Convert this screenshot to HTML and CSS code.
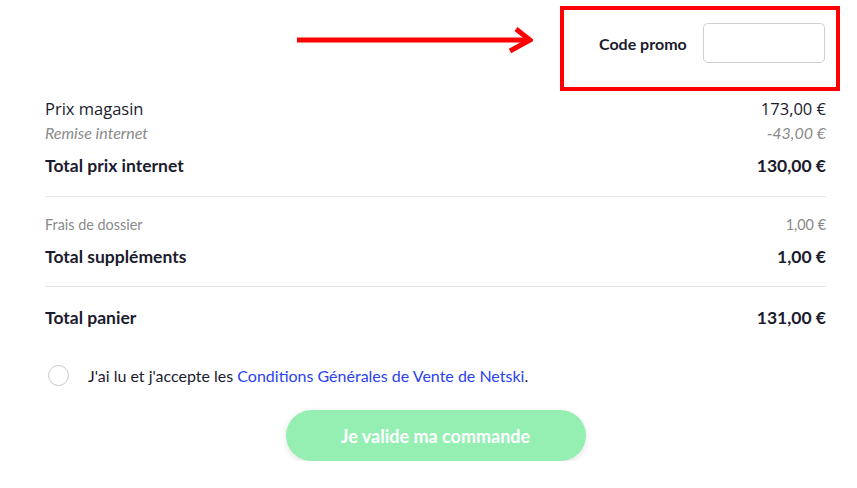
FILE: index.html
```html
<!DOCTYPE html>
<html lang="fr">
<head>
<meta charset="utf-8">
<title>Panier</title>
<link rel="stylesheet" href="styles.css">
</head>
<body>
<div class="page">
  <div class="top">
    <svg class="arrow" width="236" height="26" viewBox="0 0 236 26" aria-hidden="true">
      <line x1="0" y1="13" x2="230" y2="13" stroke="#ff0000" stroke-width="5"/>
      <polyline points="219,2 233,13 213,24" fill="none" stroke="#ff0000" stroke-width="5" stroke-linejoin="miter"/>
    </svg>
    <div class="promo">
      <label class="promo-label" for="promo">Code promo</label>
      <input class="promo-input" id="promo" type="text">
    </div>
  </div>

  <div class="section first">
    <div class="row regular"><span>Prix magasin</span><span>173,00 €</span></div>
    <div class="row sub italic"><span>Remise internet</span><span>-43,00 €</span></div>
    <div class="row total"><span>Total prix internet</span><span>130,00 €</span></div>
  </div>

  <div class="section">
    <div class="row sub small"><span>Frais de dossier</span><span>1,00 €</span></div>
    <div class="row total"><span>Total suppléments</span><span>1,00 €</span></div>
  </div>

  <div class="section last">
    <div class="row total"><span>Total panier</span><span>131,00 €</span></div>
  </div>

  <div class="cgv">
    <span class="radio"></span>
    <span class="cgv-text">J'ai lu et j'accepte les <a class="link" href="#">Conditions Générales de Vente de Netski</a>.</span>
  </div>

  <div class="actions">
    <button class="submit" type="button">Je valide ma commande</button>
  </div>
</div>
</body>
</html>
```

FILE: styles.css
```css
* { box-sizing: border-box; }
html, body { margin: 0; padding: 0; background: #ffffff; }
body {
  font-family: Lato, "Open Sans", "Liberation Sans", sans-serif;
  color: #1b1b2e;
}
.page {
  width: 857px;
  padding: 0 31px 0 45px;
}
.top {
  display: flex;
  justify-content: flex-end;
  align-items: flex-start;
  gap: 27px;
  margin-top: 6px;
  margin-right: -14px;
}
.arrow {
  margin-top: 21px;
  display: block;
}
.promo {
  display: flex;
  align-items: center;
  gap: 16px;
  width: 280px;
  height: 85px;
  border: 4px solid #ff0000;
  padding: 13px 12px 24px 35px;
}
.promo-label {
  font-size: 16px;
  font-weight: 700;
  color: #1b1b2e;
  white-space: nowrap;
}
.promo-input {
  width: 122px;
  height: 40px;
  border: 1px solid #cfcfcf;
  border-radius: 5px;
  background: #fff;
  outline: none;
}
.section {
  border-bottom: 1px solid #e8e8e8;
  padding: 17px 0 18px;
}
.section.first { padding-top: 5px; padding-bottom: 19px; }
.section.last { border-bottom: none; padding-top: 18px; padding-bottom: 0; }
.row {
  display: flex;
  justify-content: space-between;
  align-items: center;
  height: 24px;
  font-size: 17px;
}
.row.regular { font-family: "Open Sans", Lato, sans-serif; font-size: 16.5px; }
.row.sub { color: #8a8a8a; }
.row.italic { font-style: italic; font-size: 16px; }
.row.small { font-size: 14.4px; height: 20px; }
.row.total { font-weight: 700; font-size: 17.5px; margin-top: 9px; }
.section.last .row.total { margin-top: 0; }
.section .row.small + .row.total { margin-top: 10px; }
.cgv {
  display: flex;
  align-items: center;
  margin-top: 34px;
  height: 24px;
  padding-left: 3px;
}
.radio {
  width: 21px;
  height: 21px;
  border: 1px solid #c8c8c8;
  border-radius: 50%;
  margin-right: 19px;
  flex: none;
}
.cgv-text { font-size: 16px; color: #1b1b2e; }
.link { color: #2a42f0; text-decoration: none; }
.actions {
  display: flex;
  justify-content: center;
  margin-top: 23px;
}
.submit {
  width: 300px;
  height: 51px;
  border: none;
  border-radius: 26px;
  background: #95efb3;
  color: #ffffff;
  font-family: Lato, "Open Sans", "Liberation Sans", sans-serif;
  font-weight: 700;
  font-size: 18px;
  box-shadow: 0 2px 6px rgba(0, 0, 0, 0.12);
}
```
